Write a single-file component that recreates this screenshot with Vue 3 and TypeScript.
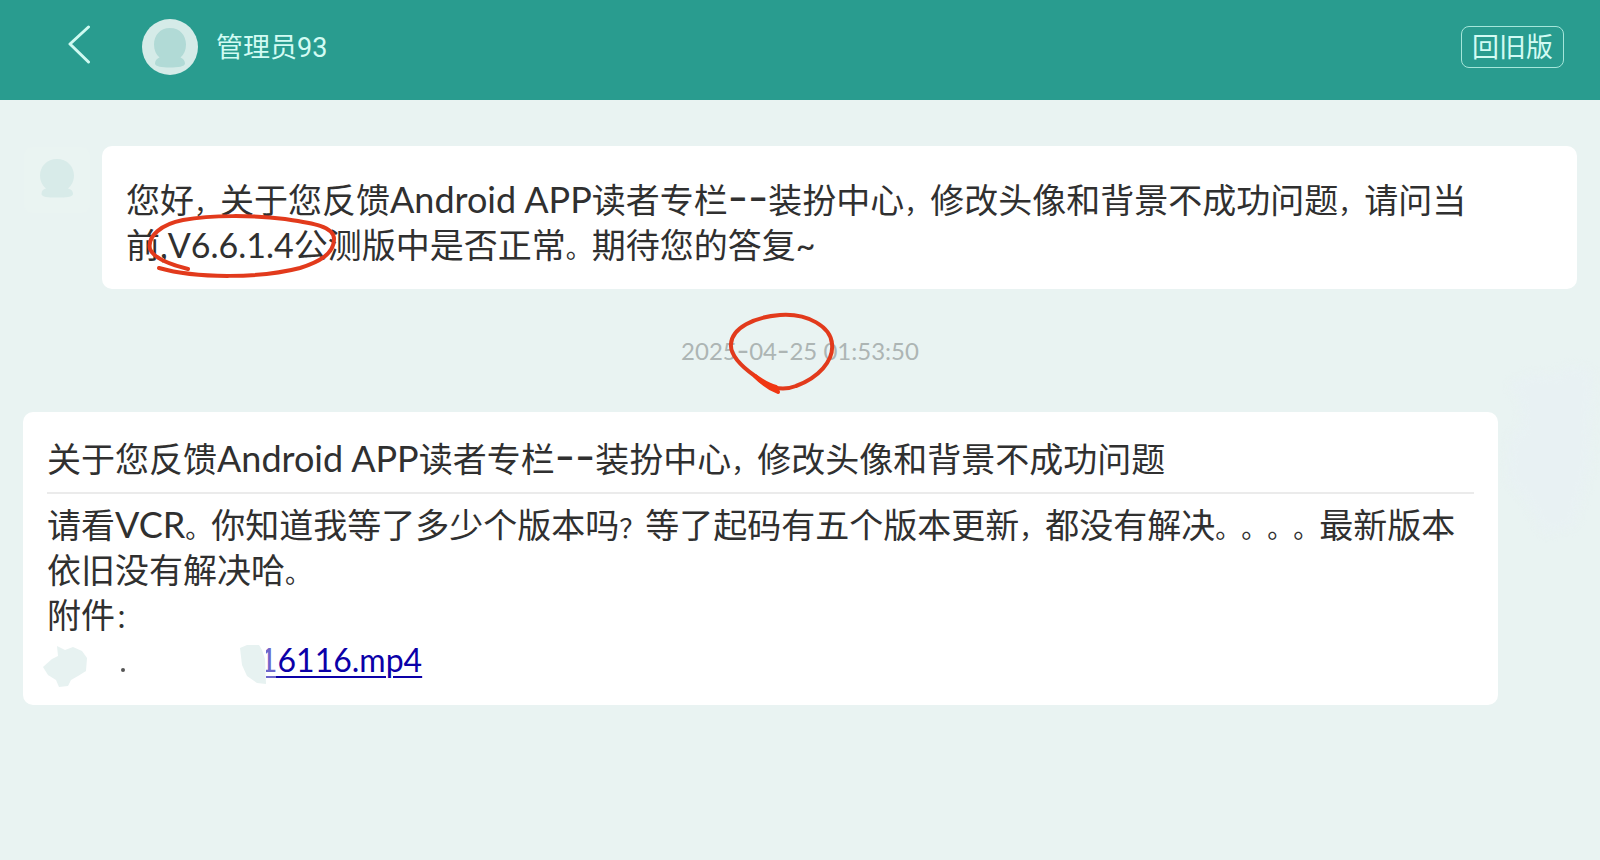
<script setup lang="ts">
type Kind = 'text' | 'punct' | 'dash' | 'latin'
interface Run { kind: Kind; text: string }

const admin = '管理员93'
const reply = '您好，关于您反馈Android APP读者专栏--装扮中心，修改头像和背景不成功问题，请问当前,V6.6.1.4公测版中是否正常。期待您的答复~'
const time = '2025-04-25 01:53:50'
const title = '关于您反馈Android APP读者专栏--装扮中心，修改头像和背景不成功问题'
const body = '请看VCR。你知道我等了多少个版本吗？等了起码有五个版本更新，都没有解决。。。。最新版本依旧没有解决哈。'

// Splits a message so that punctuation, dashes and Latin words can be set in their own sizes.
function runs(source: string): Run[] {
  return source
    .split(/([，。？]+|-+|[A-Za-z][A-Za-z ]+)/)
    .filter((part) => part !== '')
    .map((text) => ({ text, kind: kindOf(text) }))
}

function kindOf(text: string): Kind {
  if (/^[，。？]/.test(text)) return 'punct'
  if (text.startsWith('-')) return 'dash'
  return /^[A-Za-z ]+$/.test(text) && text.length > 1 ? 'latin' : 'text'
}
</script>

<template>
  <div class="page">
    <header class="bar">
      <button class="back" type="button" aria-label="返回">
        <svg width="24" height="40" viewBox="0 0 24 40" fill="none">
          <path d="M20.500 3 L2 20 L20.500 38" stroke="#cffaf1" stroke-width="3" stroke-linecap="round" stroke-linejoin="round" />
        </svg>
      </button>
      <svg class="face" width="56" height="56" viewBox="0 0 56 56">
        <circle cx="28" cy="28" r="28" fill="#d5ebe8" />
        <path d="M28 9 C18 9 12 16.500 12 25.500 C12 31 14 35.500 17.500 38.500 C15 39.500 13 41.500 13 44.500 C13 47.500 20 48.500 28 48.500 C36 48.500 43 47.500 43 44.500 C43 41.500 41 39.500 38.500 38.500 C42 35.500 44 31 44 25.500 C44 16.500 38 9 28 9 Z" fill="#b1dad6" />
      </svg>
      <h1 class="name">{{ admin }}</h1>
      <button class="old" type="button">回旧版</button>
    </header>

    <main class="chat">
      <section class="received">
        <svg class="small-face" width="68" height="68" viewBox="0 0 68 68">
          <rect x="1" y="1" width="66" height="66" rx="8" fill="#eaf4f2" />
          <path d="M34 13 C24 13 17 20.500 17 29.500 C17 35 19.500 39.500 23 42.500 C20 43 18.500 45 18.500 48 C18.500 51 25 51.500 34 51.500 C43 51.500 50 51 50 48 C50 45 48 43 45 42.500 C48.500 39.500 51 35 51 29.500 C51 20.500 44 13 34 13 Z" fill="#d8ebe9" />
        </svg>
        <article class="bubble reply">
          <p><span v-for="(run, i) in runs(reply)" :key="i" :class="run.kind">{{ run.text }}</span></p>
          <svg class="mark version-mark" width="200" height="70" viewBox="0 0 200 70" fill="none" aria-hidden="true">
            <path d="M41 55 C25 51 7 45 3 35 C0 22 15 10 36 6 C65 1 105 1 138 5 C165 9 187 12 187 25 C187 40 172 48 153 54 C115 64 50 65 12 54" stroke="#e23a1c" stroke-width="4" stroke-linecap="round" stroke-linejoin="round" />
          </svg>
        </article>
      </section>

      <div class="moment">
        <time datetime="2025-04-25T01:53:50"><span v-for="(run, i) in runs(time)" :key="i" :class="run.kind">{{ run.text }}</span></time>
        <svg class="mark date-mark" width="112" height="84" viewBox="0 0 112 84" fill="none" aria-hidden="true">
          <path d="M28 64 C14 54 3 42 4 32 C5 16 27 5 53 3 C81 1 104 15 105 32 C107 49 91 66 69 74 C54 80 39 75 28 64" stroke="#e23a1c" stroke-width="4" stroke-linecap="round" stroke-linejoin="round" />
          <path d="M28 64 C35 71 43 77 51 80 L49 75 C41 73 35 69 28 64 Z" fill="#f03613" stroke="#f03613" stroke-width="4" stroke-linejoin="round" />
        </svg>
      </div>

      <section class="sent">
        <article class="bubble feedback">
          <h2><span v-for="(run, i) in runs(title)" :key="i" :class="run.kind">{{ run.text }}</span></h2>
          <p><span v-for="(run, i) in runs(body)" :key="i" :class="run.kind">{{ run.text }}</span></p>
          <p>附件<span class="punct">：</span></p>
          <p class="file">
            <svg class="smudge" width="216" height="45" viewBox="0 0 216 45" aria-hidden="true">
              <path d="M0 24 L9 16 L15 13 L14 3 L22 7 L30 4 L39 8 L44 15 L43 28 L35 33 L28 37 L25 43 L16 44 L13 37 L5 32 Z" fill="#e7f2f1" />
              <circle cx="80" cy="27" r="2" fill="#555" />
            </svg>
            <a href="#16116.mp4">16116.mp4</a>
            <svg class="mark blot" width="46" height="45" viewBox="0 0 46 45" aria-hidden="true">
              <path d="M26 0 H37 V42 H26 Z" fill="#fff" fill-opacity="0.4" />
              <path d="M16 0 H27 V45 H16 Z" fill="#fff" />
              <path d="M1 5 L8 2 L20 2 L23 7 L26 16 L27 41 L18 40 L8 33 L3 22 Z" fill="#e7f2f1" />
            </svg>
          </p>
        </article>
        <svg class="tint" width="88" height="172" viewBox="0 0 88 172" aria-hidden="true">
          <path d="M2 18 L26 8 L50 10 L62 0 L86 4 L84 100 L68 160 L38 168 L22 138 L2 114 L4 70 L16 62 L14 34 Z" fill="#e8f1f3" />
        </svg>
      </section>
    </main>
  </div>
</template>

<style>
body {
  margin: 0;
  background: #e9f3f2;
}
</style>

<style scoped>
.page {
  min-height: 100vh;
  overflow: hidden;
  background: #e9f3f2;
  color: #303030;
  font-family: Lato, "Noto Sans CJK SC", sans-serif;
  text-spacing-trim: space-all;
}
.bar {
  display: flex;
  align-items: center;
  box-sizing: border-box;
  height: 100px;
  padding: 0 36px 6px 68px;
  background: #299c8f;
  color: #d2fbf3;
  font-family: Roboto, "Noto Sans CJK SC", sans-serif;
}
.back {
  display: flex;
  padding: 0 0 6px;
  border: 0;
  background: none;
}
.face {
  flex: none;
  margin-left: 50px;
}
.name {
  flex: 1;
  margin: 0 0 0 18px;
  padding-top: 2px;
  font-size: 27px;
  line-height: 40px;
  font-weight: 400;
}
.old {
  height: 42px;
  padding: 2px 10px 0;
  border: 1px solid #a5e6da;
  border-radius: 8px;
  background: none;
  color: inherit;
  font: inherit;
  font-size: 27px;
  line-height: 38px;
}
.chat {
  padding: 46px 23px 24px;
}
.received,
.sent {
  display: flex;
  align-items: flex-start;
}
.small-face {
  flex: none;
  margin-right: 11px;
}
.bubble {
  position: relative;
  flex: 1;
  box-sizing: border-box;
  border-radius: 10px;
  background: #fff;
  font-size: 34px;
  line-height: 45px;
}
.bubble p {
  margin: 0;
}
.reply {
  padding: 31px 24px 22px;
}
.feedback {
  padding: 24px 24px 23px;
}
.feedback h2 {
  margin: 0 0 8px;
  padding-bottom: 11px;
  border-bottom: 2px solid #ebebeb;
  font-size: 34px;
  line-height: 45px;
  font-weight: 400;
}
.punct {
  font-size: 26px;
  line-height: 1;
}
.latin {
  font-size: 36px;
  line-height: 1;
}
.dash {
  font-family: Inter, sans-serif;
  font-size: 44px;
  line-height: 36px;
}
.moment {
  position: relative;
  display: flex;
  justify-content: center;
  padding: 46px 0 45px;
  color: #adb5b4;
  font-size: 24px;
  line-height: 32px;
}
.moment .dash {
  font-size: 27px;
  line-height: 1;
}
.mark {
  position: absolute;
  pointer-events: none;
}
.version-mark {
  left: 45px;
  top: 68px;
}
.date-mark {
  left: calc(50% - 73px);
  top: 23px;
}
.file {
  position: relative;
  display: flex;
}
.smudge {
  flex: none;
  margin: 6px 0 -6px -4px;
}
.file a {
  color: #0b00a8;
  font-size: 32px;
  text-decoration-thickness: 2px;
  text-underline-offset: 4px;
}
.blot {
  left: 192px;
  top: 6px;
}
.tint {
  flex: none;
  margin: -46px -17px 0 8px;
  filter: blur(4px);
}
</style>
